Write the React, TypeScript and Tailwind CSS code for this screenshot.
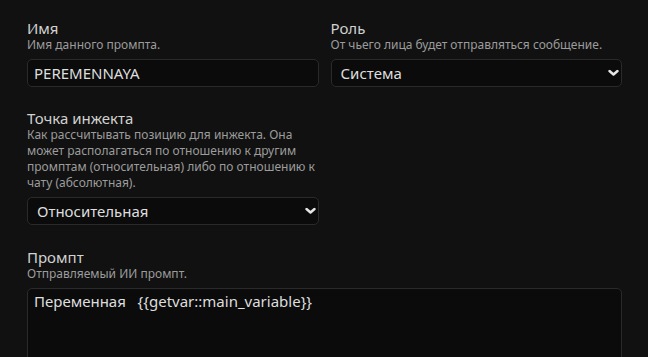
import { useState } from 'react';

function Chevron() {
  return (
    <svg
      className="pointer-events-none absolute right-[3px] top-1/2 -translate-y-1/2"
      width="11"
      height="7"
      viewBox="0 0 11 7"
      fill="none"
    >
      <path d="M1.5 1.5 L5.5 5 L9.5 1.5" stroke="#e6e6e6" strokeWidth="2.4" strokeLinecap="round" strokeLinejoin="round" />
    </svg>
  );
}

function Field({ label, hint, children }: { label: string; hint: string; children: React.ReactNode }) {
  return (
    <div className="flex flex-col">
      <div className="text-[15px] leading-[18px] text-[#d2d2d2]">{label}</div>
      <div className="text-[12px] leading-[16px] text-[#9c9c9c]">{hint}</div>
      <div className="mt-[6px]">{children}</div>
    </div>
  );
}

function Select({ value, options }: { value: string; options: string[] }) {
  return (
    <div className="relative">
      <select
        defaultValue={value}
        className="h-[28px] w-full appearance-none rounded-[5px] border border-[#2a2a2a] bg-[#0b0b0b] pl-[9px] pr-6 text-[15px] text-[#dedede] outline-none"
      >
        {options.map((o) => (
          <option key={o}>{o}</option>
        ))}
      </select>
      <Chevron />
    </div>
  );
}

export default function App() {
  const [name, setName] = useState('PEREMENNAYA');
  const [prompt, setPrompt] = useState('Переменная   {{getvar::main_variable}}');

  return (
    <div className="h-[357px] overflow-hidden bg-[#111111] pl-[27px] pr-[26px] pt-[19px] font-['Noto_Sans',sans-serif]">
      <div className="grid grid-cols-2 gap-x-[12px]">
        <Field label="Имя" hint="Имя данного промпта.">
          <input
            value={name}
            onChange={(e) => setName(e.target.value)}
            className="h-[28px] w-full rounded-[5px] border border-[#2a2a2a] bg-[#0b0b0b] px-[6px] text-[15px] text-[#dedede] outline-none"
          />
        </Field>
        <Field label="Роль" hint="От чьего лица будет отправляться сообщение.">
          <Select value="Система" options={['Система', 'Пользователь', 'ИИ']} />
        </Field>
      </div>

      <div className="mt-[22px] grid grid-cols-2 gap-x-[12px]">
        <Field
          label="Точка инжекта"
          hint="Как рассчитывать позицию для инжекта. Она может располагаться по отношению к другим промптам (относительная) либо по отношению к чату (абсолютная)."
        >
          <Select value="Относительная" options={['Относительная', 'Абсолютная']} />
        </Field>
      </div>

      <div className="mt-[23px]">
        <Field label="Промпт" hint="Отправляемый ИИ промпт.">
          <textarea
            value={prompt}
            onChange={(e) => setPrompt(e.target.value)}
            className="block h-[120px] w-full resize-none rounded-[5px] border border-[#2a2a2a] bg-[#0b0b0b] px-[6px] pt-[2px] text-[15px] leading-[20px] text-[#dedede] outline-none"
          />
        </Field>
      </div>
    </div>
  );
}
